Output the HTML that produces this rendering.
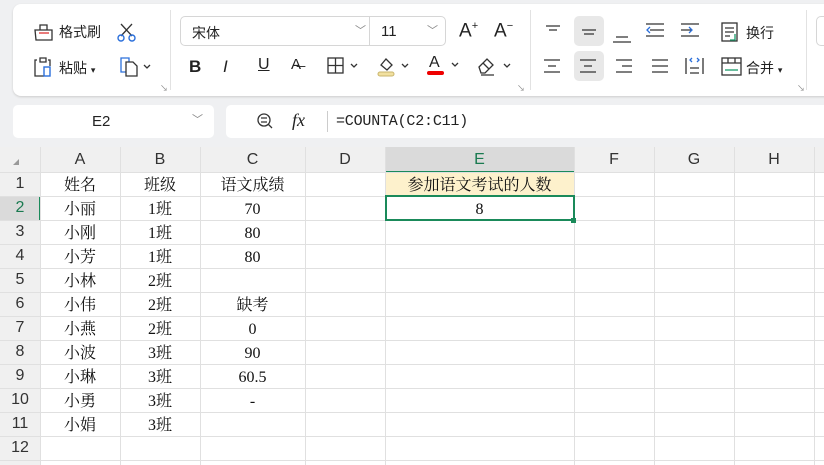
<!DOCTYPE html>
<html><head><meta charset="utf-8"><style>
*{margin:0;padding:0;box-sizing:border-box}
body{width:824px;height:465px;background:#eff0f2;font-family:"Liberation Sans","Noto Sans CJK SC",sans-serif;position:relative;overflow:hidden;color:#222}
.abs{position:absolute}
.card{left:13px;top:4px;width:830px;height:92px;background:#fff;border-radius:8px;box-shadow:0 1px 2px #ccc}
.t{font-size:14px;color:#222;position:absolute}
.sep{position:absolute;width:1px;background:#e2e2e2}
.grid{left:0;top:147px;width:824px;height:318px;background:#fff}
.cell{position:absolute;font-family:"Liberation Serif","Noto Serif CJK SC",serif;font-size:16px;text-align:center;color:#111;line-height:24px;padding-top:2px}
.hd{position:absolute;font-size:16px;color:#333;text-align:center;line-height:25px}
</style></head><body>
<div class="abs card"></div>
<svg class="abs" style="left:33px;top:22px" width="22" height="20"><path d="M2 8h17v10H3z M7 8V3h7v5" fill="none" stroke="#333" stroke-width="1.3"/><path d="M6 11h10" stroke="#d33" stroke-width="1.3"/></svg>
<div class="t" style="left:59px;top:22px">格式刷</div>
<svg class="abs" style="left:116px;top:22px" width="22" height="20"><path d="M5 2l11 12M16 2L5 14" stroke="#333" stroke-width="1.3" fill="none"/><circle cx="5" cy="16" r="3" fill="none" stroke="#2a6fdb" stroke-width="1.4"/><circle cx="16" cy="16" r="3" fill="none" stroke="#2a6fdb" stroke-width="1.4"/></svg>
<svg class="abs" style="left:33px;top:56px" width="22" height="22"><path d="M4 4h-2v16h9 M15 4h2v6 M7 2h6v4H7z" fill="none" stroke="#333" stroke-width="1.3"/><rect x="11" y="11" width="6" height="9" fill="none" stroke="#2a6fdb" stroke-width="1.4"/></svg>
<div class="t" style="left:59px;top:58px">粘贴 <span style="font-size:9px">▾</span></div>
<svg class="abs" style="left:119px;top:56px" width="34" height="22"><path d="M2 2h8v14H2z" fill="none" stroke="#2a6fdb" stroke-width="1.3"/><path d="M7 6h7l4 4v10H7z" fill="#fff" stroke="#333" stroke-width="1.3"/><path d="M25 9l3 3 3-3" fill="none" stroke="#333" stroke-width="1.3"/></svg>
<div class="t" style="left:160px;top:83px;font-size:8px;color:#888">↘</div>
<div class="sep" style="left:170px;top:10px;height:80px"></div>
<div class="abs" style="left:180px;top:16px;width:266px;height:30px;border:1px solid #d6d6d6;border-radius:5px"></div>
<div class="t" style="left:192px;top:23px">宋体</div>
<div class="t" style="left:355px;top:22px;color:#888;font-size:11px">﹀</div>
<div class="sep" style="left:369px;top:17px;height:28px;background:#d6d6d6"></div>
<div class="t" style="left:381px;top:23px;font-size:15px">11</div>
<div class="t" style="left:427px;top:22px;color:#888;font-size:11px">﹀</div>
<div class="t" style="left:459px;top:20px;font-size:19px">A<sup style="font-size:11px">+</sup></div>
<div class="t" style="left:494px;top:20px;font-size:19px">A<sup style="font-size:11px">−</sup></div>
<div class="t" style="left:189px;top:57px;font-size:17px;font-weight:bold">B</div>
<div class="t" style="left:223px;top:57px;font-size:17px;font-style:italic">I</div>
<div class="t" style="left:258px;top:56px;font-size:16px;text-decoration:underline">U</div>
<div class="t" style="left:291px;top:56px;font-size:15px">A̶</div>
<svg class="abs" style="left:327px;top:57px" width="34" height="18"><rect x="1" y="1" width="15" height="15" fill="none" stroke="#333" stroke-width="1.3"/><path d="M8.5 1v15M1 8.5h15M24 7l3 3 3-3" fill="none" stroke="#333" stroke-width="1.3"/></svg>
<svg class="abs" style="left:376px;top:55px" width="34" height="22"><path d="M5 10l5-6 6 6-5 5z" fill="none" stroke="#333" stroke-width="1.3"/><rect x="2" y="17" width="16" height="4" rx="2" fill="#f1e0a0" stroke="#c9b56c"/><path d="M26 9l3 3 3-3" fill="none" stroke="#333" stroke-width="1.3"/></svg>
<div class="t" style="left:429px;top:54px;font-size:16px">A</div>
<div class="abs" style="left:427px;top:71px;width:17px;height:4px;background:#e00;border-radius:2px"></div>
<svg class="abs" style="left:450px;top:60px" width="10" height="10"><path d="M2 3l3 3 3-3" fill="none" stroke="#333" stroke-width="1.3"/></svg>
<svg class="abs" style="left:476px;top:55px" width="36" height="22"><path d="M3 12l8-8 6 6-8 8H5z M7 8l6 6 M5 20h13" fill="none" stroke="#333" stroke-width="1.3"/><path d="M28 9l3 3 3-3" fill="none" stroke="#333" stroke-width="1.3"/></svg>
<div class="t" style="left:517px;top:83px;font-size:8px;color:#888">↘</div>
<div class="sep" style="left:530px;top:10px;height:80px"></div>
<div class="abs" style="left:574px;top:16px;width:30px;height:30px;background:#e8e8e8;border-radius:5px"></div>
<div class="abs" style="left:574px;top:51px;width:30px;height:30px;background:#e8e8e8;border-radius:5px"></div>
<svg class="abs" style="left:540px;top:18px" width="220" height="64" fill="none" stroke="#333" stroke-width="1.3">
<path d="M6 8h14M9 12h8"/><path d="M42 12h14M44 16h10"/><path d="M76 19h12M73 24h18"/>
<path d="M106 6h18M110 12h14M106 18h18" /><path d="M110 9l-3 3 3 3" stroke="#2a6fdb"/>
<path d="M141 6h18M141 12h10M141 18h18"/><path d="M149 9l3 3-3 3" stroke="#2a6fdb"/>
<path d="M4 42h16M8 48h8M4 54h16"/><path d="M40 42h16M44 48h8M40 54h16"/><path d="M76 42h16M82 48h10M76 54h16"/><path d="M112 42h16M112 48h16M112 54h16"/>
<path d="M146 40v16M163 40v16M150 50h9M150 55h9"/><path d="M152 44l-2-2 2-2M157 40l2 2-2 2" stroke="#2a6fdb"/>
<rect x="182" y="5" width="15" height="18"/><path d="M185 10h9M185 14h9M185 18h5"/><path d="M195 16v6h-5" stroke="#1a9a6a"/>
<rect x="182" y="40" width="19" height="17"/><path d="M182 45h19M188 40v5M195 40v5"/><path d="M185 52h13" stroke="#1a9a6a"/>
</svg>
<div class="t" style="left:746px;top:23px">换行</div>
<div class="t" style="left:746px;top:58px">合并 <span style="font-size:9px">▾</span></div>
<div class="t" style="left:797px;top:83px;font-size:8px;color:#888">↘</div>
<div class="sep" style="left:806px;top:10px;height:80px"></div>
<div class="abs" style="left:816px;top:16px;width:20px;height:30px;border:1px solid #d6d6d6;border-radius:5px"></div>
<div class="abs" style="left:13px;top:105px;width:201px;height:33px;background:#fff;border-radius:5px"></div>
<div class="t" style="left:92px;top:113px;font-size:15px">E2</div>
<div class="t" style="left:192px;top:111px;color:#888;font-size:11px">﹀</div>
<div class="abs" style="left:226px;top:105px;width:610px;height:33px;background:#fff;border-radius:5px"></div>
<svg class="abs" style="left:255px;top:111px" width="20" height="20" fill="none" stroke="#333" stroke-width="1.3"><circle cx="9" cy="9" r="6"/><path d="M13 13l4 4M6 7h6M6 11h6"/></svg>
<div class="t" style="left:292px;top:110px;font-family:'Liberation Serif',serif;font-style:italic;font-size:18px">fx</div>
<div class="sep" style="left:327px;top:111px;height:21px;background:#ccc"></div>
<div class="t" style="left:336px;top:113px;font-family:'Liberation Mono',monospace;font-size:15px;letter-spacing:-0.2px">=COUNTA(C2:C11)</div>
<div class="abs grid"></div>
<div class="abs" style="left:0;top:147px;width:824px;height:25px;background:#f0f0f0"></div>
<div class="abs" style="left:0;top:147px;width:40px;height:318px;background:#f0f0f0"></div>
<div class="abs" style="left:385px;top:147px;width:189px;height:25px;background:#dadada"></div>
<div class="abs" style="left:385px;top:171px;width:189px;height:2px;background:#1a8a5a"></div>
<div class="abs" style="left:0;top:196px;width:40px;height:24px;background:#dadada"></div>
<div class="abs" style="left:39px;top:196px;width:2px;height:24px;background:#1a8a5a"></div>
<div class="abs" style="left:385px;top:172px;width:189px;height:24px;background:#fdf1cc"></div>
<svg class="abs" style="left:0;top:147px" width="824" height="318">
<g stroke="#e0e0e0" stroke-width="1">
<path d="M40.5 0v318M120.5 0v318M200.5 0v318M305.5 0v318M385.5 0v318M574.5 0v318M654.5 0v318M734.5 0v318M814.5 0v318"/>
<path d="M0 25.5h824M0 49.5h824M0 73.5h824M0 97.5h824M0 121.5h824M0 145.5h824M0 169.5h824M0 193.5h824M0 217.5h824M0 241.5h824M0 265.5h824M0 289.5h824M0 313.5h824"/>
</g>
<path d="M13 18l6-6v6z" fill="#999"/>
</svg>
<div class="abs" style="left:385px;top:195px;width:190px;height:26px;border:2px solid #1a8a5a"></div>
<div class="abs" style="left:571px;top:218px;width:5px;height:5px;background:#1a8a5a"></div>
<div class="hd" style="left:40px;top:147px;width:80px">A</div>
<div class="hd" style="left:120px;top:147px;width:80px">B</div>
<div class="hd" style="left:200px;top:147px;width:105px">C</div>
<div class="hd" style="left:305px;top:147px;width:80px">D</div>
<div class="hd" style="left:385px;top:147px;width:189px;color:#1a7a50">E</div>
<div class="hd" style="left:574px;top:147px;width:80px">F</div>
<div class="hd" style="left:654px;top:147px;width:80px">G</div>
<div class="hd" style="left:734px;top:147px;width:80px">H</div>
<div class="hd" style="left:0;top:172px;width:40px;line-height:24px">1</div>
<div class="hd" style="left:0;top:196px;width:40px;line-height:24px;color:#1a7a50">2</div>
<div class="hd" style="left:0;top:220px;width:40px;line-height:24px">3</div>
<div class="hd" style="left:0;top:244px;width:40px;line-height:24px">4</div>
<div class="hd" style="left:0;top:268px;width:40px;line-height:24px">5</div>
<div class="hd" style="left:0;top:292px;width:40px;line-height:24px">6</div>
<div class="hd" style="left:0;top:316px;width:40px;line-height:24px">7</div>
<div class="hd" style="left:0;top:340px;width:40px;line-height:24px">8</div>
<div class="hd" style="left:0;top:364px;width:40px;line-height:24px">9</div>
<div class="hd" style="left:0;top:388px;width:40px;line-height:24px">10</div>
<div class="hd" style="left:0;top:412px;width:40px;line-height:24px">11</div>
<div class="hd" style="left:0;top:436px;width:40px;line-height:24px">12</div>
<div class="cell" style="left:40px;top:172px;width:80px">姓名</div>
<div class="cell" style="left:120px;top:172px;width:80px">班级</div>
<div class="cell" style="left:200px;top:172px;width:105px">语文成绩</div>
<div class="cell" style="left:385px;top:172px;width:189px">参加语文考试的人数</div>
<div class="cell" style="left:385px;top:196px;width:189px">8</div>
<div class="cell" style="left:40px;top:196px;width:80px">小丽</div><div class="cell" style="left:120px;top:196px;width:80px">1班</div><div class="cell" style="left:200px;top:196px;width:105px">70</div>
<div class="cell" style="left:40px;top:220px;width:80px">小刚</div><div class="cell" style="left:120px;top:220px;width:80px">1班</div><div class="cell" style="left:200px;top:220px;width:105px">80</div>
<div class="cell" style="left:40px;top:244px;width:80px">小芳</div><div class="cell" style="left:120px;top:244px;width:80px">1班</div><div class="cell" style="left:200px;top:244px;width:105px">80</div>
<div class="cell" style="left:40px;top:268px;width:80px">小林</div><div class="cell" style="left:120px;top:268px;width:80px">2班</div>
<div class="cell" style="left:40px;top:292px;width:80px">小伟</div><div class="cell" style="left:120px;top:292px;width:80px">2班</div><div class="cell" style="left:200px;top:292px;width:105px">缺考</div>
<div class="cell" style="left:40px;top:316px;width:80px">小燕</div><div class="cell" style="left:120px;top:316px;width:80px">2班</div><div class="cell" style="left:200px;top:316px;width:105px">0</div>
<div class="cell" style="left:40px;top:340px;width:80px">小波</div><div class="cell" style="left:120px;top:340px;width:80px">3班</div><div class="cell" style="left:200px;top:340px;width:105px">90</div>
<div class="cell" style="left:40px;top:364px;width:80px">小琳</div><div class="cell" style="left:120px;top:364px;width:80px">3班</div><div class="cell" style="left:200px;top:364px;width:105px">60.5</div>
<div class="cell" style="left:40px;top:388px;width:80px">小勇</div><div class="cell" style="left:120px;top:388px;width:80px">3班</div><div class="cell" style="left:200px;top:388px;width:105px">-</div>
<div class="cell" style="left:40px;top:412px;width:80px">小娟</div><div class="cell" style="left:120px;top:412px;width:80px">3班</div>
</body></html>
